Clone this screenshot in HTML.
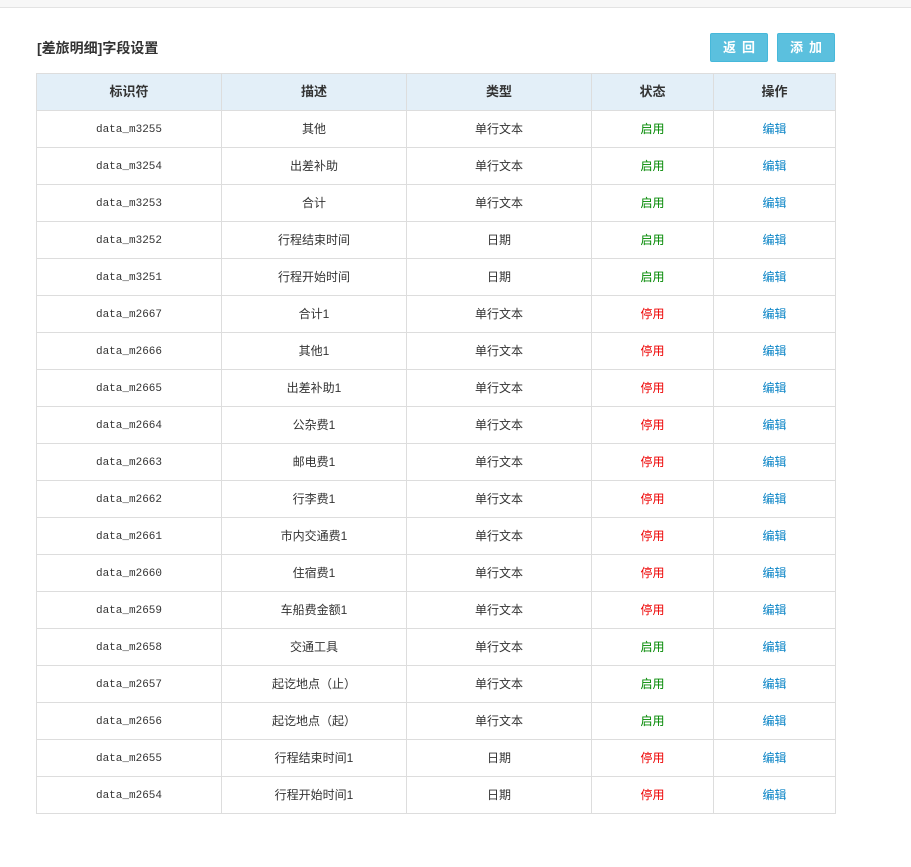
<!DOCTYPE html>
<html><head><meta charset="utf-8"><style>
body{margin:0;background:#fff;font-family:"Liberation Sans","Noto Sans CJK SC",sans-serif;font-size:12px;color:#333;}
.top{height:7px;background:#f7f7f7;border-bottom:1px solid #e3e3e3;}
h3{position:absolute;left:37px;top:38px;margin:0;font-size:14px;font-weight:bold;color:#333;}
.btn{position:absolute;top:33px;width:58px;height:29px;background:#5bc0de;border:1px solid #46b8da;box-sizing:border-box;border-radius:2px;color:#fff;font-weight:bold;font-size:13px;text-align:center;line-height:27px;letter-spacing:6px;text-indent:6px;}
table{position:absolute;left:36px;top:73px;width:799px;border-collapse:collapse;table-layout:fixed;}
th,td{border:1px solid #ddd;height:36px;text-align:center;padding:0;vertical-align:middle;line-height:16px;}
td{padding-bottom:1px;height:35px;}
td span{display:inline-block;vertical-align:middle;line-height:16px;}
th{background:#e3eff8;font-weight:bold;font-size:13px;height:36px;}
td.m span{font-family:"Liberation Mono",monospace;font-size:11px;padding-top:2px;}
.g{color:#080;}.r{color:#e00;}.e{color:#0a84c6;}
</style></head><body>
<div class="top"></div>
<h3>[差旅明细]字段设置</h3>
<div class="btn" style="left:710px">返回</div>
<div class="btn" style="left:777px">添加</div>
<table>
<colgroup><col style="width:185px"><col style="width:185px"><col style="width:185px"><col style="width:122px"><col style="width:122px"></colgroup>
<tr><th>标识符</th><th>描述</th><th>类型</th><th>状态</th><th>操作</th></tr>
<tr><td class="m"><span>data_m3255</span></td><td>其他</td><td>单行文本</td><td class="g">启用</td><td class="e">编辑</td></tr>
<tr><td class="m"><span>data_m3254</span></td><td>出差补助</td><td>单行文本</td><td class="g">启用</td><td class="e">编辑</td></tr>
<tr><td class="m"><span>data_m3253</span></td><td>合计</td><td>单行文本</td><td class="g">启用</td><td class="e">编辑</td></tr>
<tr><td class="m"><span>data_m3252</span></td><td>行程结束时间</td><td>日期</td><td class="g">启用</td><td class="e">编辑</td></tr>
<tr><td class="m"><span>data_m3251</span></td><td>行程开始时间</td><td>日期</td><td class="g">启用</td><td class="e">编辑</td></tr>
<tr><td class="m"><span>data_m2667</span></td><td>合计1</td><td>单行文本</td><td class="r">停用</td><td class="e">编辑</td></tr>
<tr><td class="m"><span>data_m2666</span></td><td>其他1</td><td>单行文本</td><td class="r">停用</td><td class="e">编辑</td></tr>
<tr><td class="m"><span>data_m2665</span></td><td>出差补助1</td><td>单行文本</td><td class="r">停用</td><td class="e">编辑</td></tr>
<tr><td class="m"><span>data_m2664</span></td><td>公杂费1</td><td>单行文本</td><td class="r">停用</td><td class="e">编辑</td></tr>
<tr><td class="m"><span>data_m2663</span></td><td>邮电费1</td><td>单行文本</td><td class="r">停用</td><td class="e">编辑</td></tr>
<tr><td class="m"><span>data_m2662</span></td><td>行李费1</td><td>单行文本</td><td class="r">停用</td><td class="e">编辑</td></tr>
<tr><td class="m"><span>data_m2661</span></td><td>市内交通费1</td><td>单行文本</td><td class="r">停用</td><td class="e">编辑</td></tr>
<tr><td class="m"><span>data_m2660</span></td><td>住宿费1</td><td>单行文本</td><td class="r">停用</td><td class="e">编辑</td></tr>
<tr><td class="m"><span>data_m2659</span></td><td>车船费金额1</td><td>单行文本</td><td class="r">停用</td><td class="e">编辑</td></tr>
<tr><td class="m"><span>data_m2658</span></td><td>交通工具</td><td>单行文本</td><td class="g">启用</td><td class="e">编辑</td></tr>
<tr><td class="m"><span>data_m2657</span></td><td>起讫地点（止）</td><td>单行文本</td><td class="g">启用</td><td class="e">编辑</td></tr>
<tr><td class="m"><span>data_m2656</span></td><td>起讫地点（起）</td><td>单行文本</td><td class="g">启用</td><td class="e">编辑</td></tr>
<tr><td class="m"><span>data_m2655</span></td><td>行程结束时间1</td><td>日期</td><td class="r">停用</td><td class="e">编辑</td></tr>
<tr><td class="m"><span>data_m2654</span></td><td>行程开始时间1</td><td>日期</td><td class="r">停用</td><td class="e">编辑</td></tr>
</table>
</body></html>
